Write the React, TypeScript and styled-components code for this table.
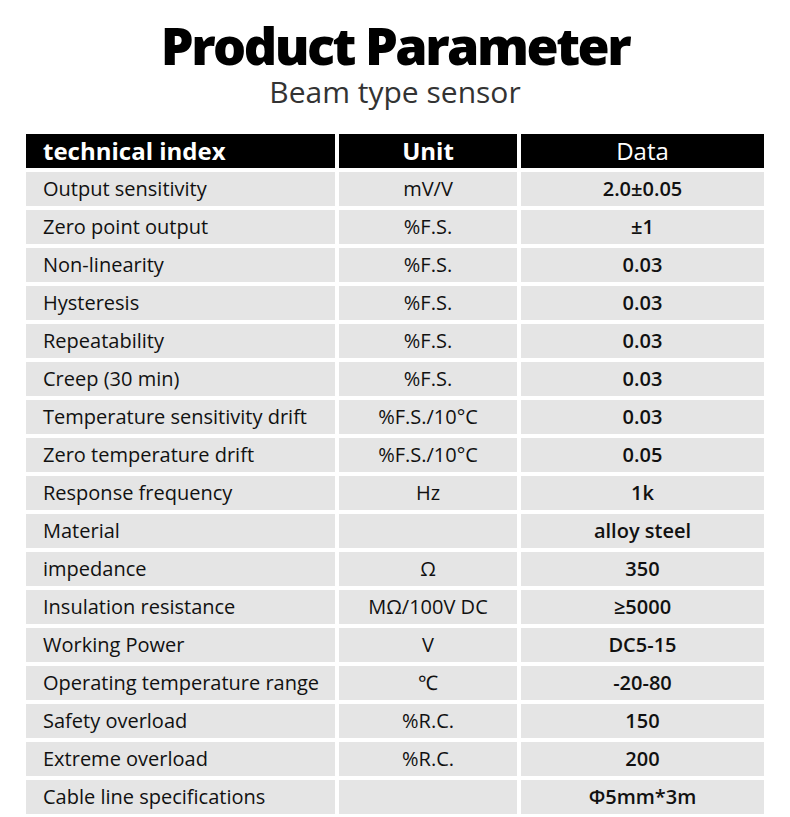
import React from "react";
import styled, { createGlobalStyle } from "styled-components";

const GlobalStyle = createGlobalStyle`
  html, body {
    margin: 0;
    padding: 0;
    background: #ffffff;
  }
  body {
    font-family: "Open Sans", "Noto Sans", "Liberation Sans", sans-serif;
  }
`;

const Page = styled.div`
  width: 790px;
  display: flex;
  flex-direction: column;
  align-items: center;
  padding-top: 19px;
`;

const Title = styled.h1`
  margin: 0;
  font-size: 52px;
  line-height: 52px;
  font-weight: 800;
  color: #000000;
  letter-spacing: -2.5px;
`;

const Subtitle = styled.h2`
  margin: 6px 0 0 0;
  font-size: 30px;
  line-height: 30px;
  font-weight: 400;
  color: #333333;
`;

const Table = styled.div`
  margin-top: 27px;
  width: 738px;
  display: flex;
  flex-direction: column;
  gap: 4px;
`;

const Row = styled.div`
  display: grid;
  grid-template-columns: 309px 178px 243px;
  column-gap: 4px;
  height: 34px;
`;

const Cell = styled.div<{ $head?: boolean; $align?: "left" | "center"; $weight?: number; $size?: number }>`
  background: ${(p) => (p.$head ? "#000000" : "#e5e5e5")};
  color: ${(p) => (p.$head ? "#ffffff" : "#111111")};
  font-size: ${(p) => p.$size ?? 20}px;
  font-weight: ${(p) => p.$weight ?? 400};
  line-height: 34px;
  text-align: ${(p) => p.$align ?? "center"};
  padding-left: ${(p) => (p.$align === "left" ? "17px" : "0")};
  white-space: nowrap;
  overflow: hidden;
`;

const rows: [string, string, string][] = [
  ["Output sensitivity", "mV/V", "2.0±0.05"],
  ["Zero point output", "%F.S.", "±1"],
  ["Non-linearity", "%F.S.", "0.03"],
  ["Hysteresis", "%F.S.", "0.03"],
  ["Repeatability", "%F.S.", "0.03"],
  ["Creep (30 min)", "%F.S.", "0.03"],
  ["Temperature sensitivity drift", "%F.S./10°C", "0.03"],
  ["Zero temperature drift", "%F.S./10°C", "0.05"],
  ["Response frequency", "Hz", "1k"],
  ["Material", "", "alloy steel"],
  ["impedance", "Ω", "350"],
  ["Insulation resistance", "MΩ/100V DC", "≥5000"],
  ["Working Power", "V", "DC5-15"],
  ["Operating temperature range", "℃", "-20-80"],
  ["Safety overload", "%R.C.", "150"],
  ["Extreme overload", "%R.C.", "200"],
  ["Cable line specifications", "", "Φ5mm*3m"],
];

export default function App() {
  return (
    <>
      <GlobalStyle />
      <Page>
        <Title>Product Parameter</Title>
        <Subtitle>Beam type sensor</Subtitle>
        <Table>
          <Row>
            <Cell $head $align="left" $weight={700} $size={24}>
              technical index
            </Cell>
            <Cell $head $weight={700} $size={24}>
              Unit
            </Cell>
            <Cell $head $weight={400} $size={24}>
              Data
            </Cell>
          </Row>
          {rows.map(([name, unit, data]) => (
            <Row key={name}>
              <Cell $align="left">{name}</Cell>
              <Cell>{unit}</Cell>
              <Cell $weight={600}>{data}</Cell>
            </Row>
          ))}
        </Table>
      </Page>
    </>
  );
}
